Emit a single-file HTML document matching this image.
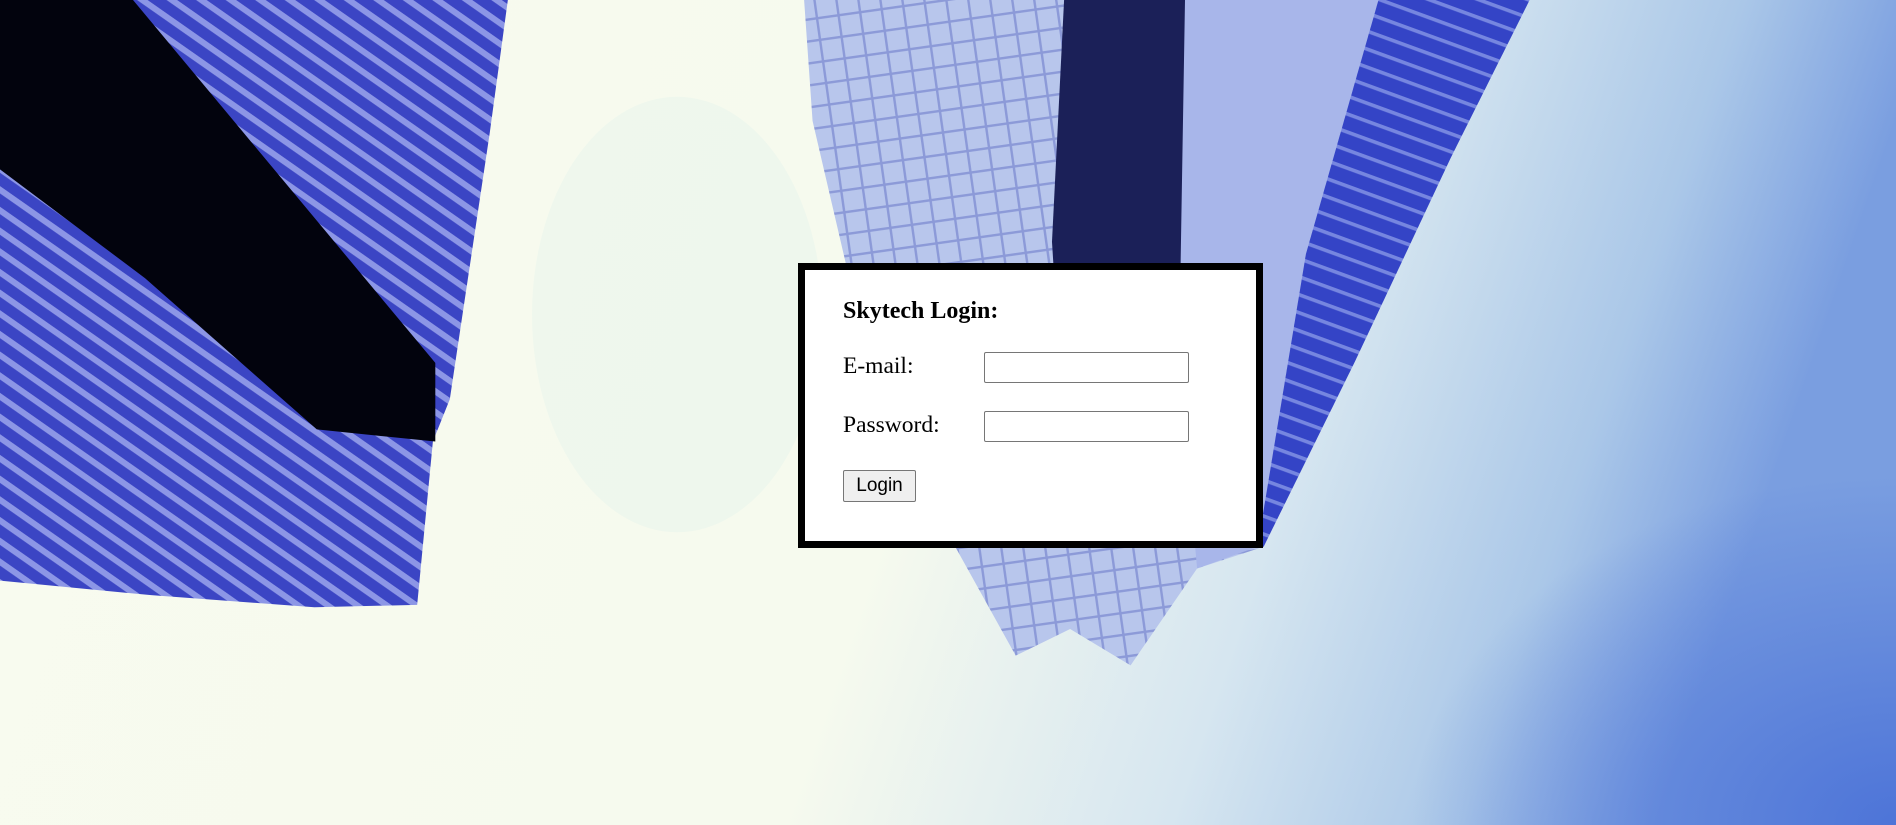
<!DOCTYPE html>
<html><head><meta charset="utf-8"><style>
html,body{margin:0;padding:0;width:1896px;height:825px;overflow:hidden}
body{position:relative;font-family:"Liberation Serif",serif}
svg.bg{position:absolute;left:0;top:0}
.box{position:absolute;left:798px;top:263px;width:451px;height:271px;border:7px solid #000;background:#fff}
.t{position:absolute;left:38px;top:28px;font-weight:bold;font-size:24px}
.l{position:absolute;left:38px;font-size:23.5px}
.i{position:absolute;left:179px;width:203px;height:29px;border:1px solid #767676;border-radius:2px;background:#fff}
.b{position:absolute;left:38px;top:200px;width:71px;height:30px;border:1px solid #767676;border-radius:2px;background:#efefef;font-family:"Liberation Sans",sans-serif;font-size:19px;text-align:center;line-height:30px}
</style></head><body>
<svg class="bg" width="1896" height="825" viewBox="0 0 1568 682" preserveAspectRatio="none">
<defs>
<linearGradient id="sky" x1="0" y1="0" x2="1" y2="0.15">
<stop offset="0" stop-color="#f8fbef"/><stop offset="0.55" stop-color="#f6faee"/>
<stop offset="0.75" stop-color="#d6e6f0"/><stop offset="0.9" stop-color="#aac7e8"/><stop offset="1" stop-color="#7a9ee0"/>
</linearGradient>
<radialGradient id="br" cx="1" cy="1" r="0.6">
<stop offset="0" stop-color="#4d74d8"/><stop offset="1" stop-color="#4d74d8" stop-opacity="0"/>
</radialGradient>
<pattern id="st" width="14" height="14" patternUnits="userSpaceOnUse" patternTransform="rotate(35)">
<rect width="14" height="14" fill="#3b45c4"/><rect width="14" height="5" fill="#8c96e6"/></pattern>
<pattern id="gl" width="18" height="18" patternUnits="userSpaceOnUse" patternTransform="rotate(-8)">
<rect width="18" height="18" fill="#b8c6ec"/><rect width="18" height="2" fill="#8c9ad8"/><rect width="2" height="18" fill="#8c9ad8"/></pattern>
<pattern id="gr" width="14" height="14" patternUnits="userSpaceOnUse" patternTransform="rotate(20)">
<rect width="14" height="14" fill="#3444c6"/><rect width="14" height="3" fill="#7686e0"/></pattern>
</defs>
<rect width="1568" height="682" fill="url(#sky)"/>
<rect x="900" y="200" width="668" height="482" fill="url(#br)"/>
<ellipse cx="560" cy="260" rx="120" ry="180" fill="#e4f3ea" opacity="0.4"/>
<polygon points="0,0 420,0 405,110 372,330 358,365 345,500 260,502 125,492 0,480" fill="url(#st)"/>
<polygon points="0,0 110,0 360,300 360,365 262,355 120,230 0,140" fill="#02030d"/>
<polygon points="665,0 1265,0 1200,130 1120,300 1045,452 990,470 935,550 885,520 840,542 790,452 700,220 672,100" fill="url(#gl)"/>
<polygon points="880,0 1020,0 990,220 960,340 880,360 870,200" fill="#1b2058"/>
<polygon points="980,0 1140,0 1080,210 1040,452 990,470 975,300" fill="#a8b6ea"/>
<polygon points="1140,0 1265,0 1200,130 1120,300 1045,452 1040,452 1080,210" fill="url(#gr)"/>
</svg>
<div class="box">
<div class="t">Skytech Login:</div>
<div class="l" style="top:83px">E-mail:</div>
<div class="i" style="top:82px"></div>
<div class="l" style="top:142px">Password:</div>
<div class="i" style="top:141px"></div>
<div class="b">Login</div>
</div>
</body></html>
